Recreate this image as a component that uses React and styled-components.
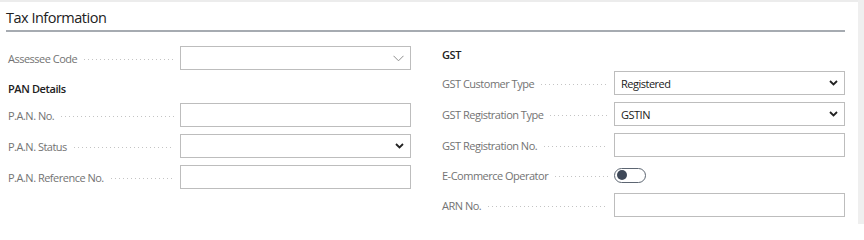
import React from "react";
import styled, { createGlobalStyle } from "styled-components";

const GlobalStyle = createGlobalStyle`
  html, body {
    margin: 0;
    padding: 0;
    background: #ffffff;
  }
  body {
    font-family: "Open Sans", "Noto Sans", "Liberation Sans", sans-serif;
  }
`;

const Page = styled.div`
  display: flex;
  width: 864px;
  height: 224px;
  overflow: hidden;
`;

const Main = styled.div`
  flex: 1;
  border-top: 2px solid #ececec;
  padding: 0 13px 0 6px;
`;

const ScrollStrip = styled.div`
  width: 6px;
  background: #efefef;
`;

const Title = styled.div`
  font-size: 14.5px;
  letter-spacing: -0.5px;
  line-height: 20px;
  color: #212121;
  padding-top: 6px;
  padding-bottom: 2px;
  border-bottom: 2px solid #a6abb1;
`;

const Columns = styled.div`
  display: grid;
  grid-template-columns: 403px 403px;
  column-gap: 31px;
  padding: 14px 0 0 2px;
`;

const Column = styled.div`
  display: flex;
  flex-direction: column;
  gap: 7px;
`;

const GroupHeader = styled.div`
  font-size: 11px;
  letter-spacing: -0.4px;
  line-height: 14px;
  font-weight: 600;
  color: #212121;
  padding: ${(p) => (p.$first ? "2px 0 2px" : "5px 0 0")};
`;

const Field = styled.div`
  display: grid;
  grid-template-columns: 172px 231px;
  align-items: center;
  height: ${(p) => (p.$short ? "22px" : "24px")};
`;

const Label = styled.div`
  display: flex;
  align-items: center;
  font-size: 11px;
  letter-spacing: -0.5px;
  color: #737373;
  white-space: nowrap;
  padding-right: 6px;
`;

const Leader = styled.span`
  flex: 1;
  height: 1px;
  margin: 3px 0 0 7px;
  background-image: linear-gradient(to right, #c4c4c4 1px, transparent 1px);
  background-size: 4px 1px;
  background-repeat: repeat-x;
`;

const Box = styled.div`
  box-sizing: border-box;
  height: 24px;
  border: 1px solid #bdbdbd;
  display: flex;
  align-items: center;
  justify-content: space-between;
  padding: 0 6px 0 6px;
  font-size: 11px;
  letter-spacing: -0.5px;
  color: #212121;
`;

const Toggle = styled.div`
  box-sizing: border-box;
  width: 32px;
  height: 15px;
  border: 1px solid #5d6672;
  border-radius: 8px;
  display: flex;
  align-items: center;
  padding-left: 2px;
`;

const Knob = styled.span`
  width: 10px;
  height: 10px;
  border-radius: 50%;
  background: #3e4858;
`;

const LookupChevron = () => (
  <svg width="11" height="7" viewBox="0 0 11 7">
    <path d="M0.5 0.8 L5.5 5.8 L10.5 0.8" fill="none" stroke="#8e8e8e" strokeWidth="1" />
  </svg>
);

const SelectChevron = () => (
  <svg width="9" height="6" viewBox="0 0 9 6">
    <path d="M1 1 L4.5 4.5 L8 1" fill="none" stroke="#222" strokeWidth="1.8" />
  </svg>
);

function Row({ label, children, short }) {
  return (
    <Field $short={short}>
      <Label>
        {label}
        <Leader />
      </Label>
      {children}
    </Field>
  );
}

export default function App() {
  return (
    <Page>
      <GlobalStyle />
      <Main>
        <Title>Tax Information</Title>
        <Columns>
          <Column>
            <Row label="Assessee Code">
              <Box>
                <span />
                <LookupChevron />
              </Box>
            </Row>
            <GroupHeader>PAN Details</GroupHeader>
            <Row label="P.A.N. No.">
              <Box />
            </Row>
            <Row label="P.A.N. Status">
              <Box>
                <span />
                <SelectChevron />
              </Box>
            </Row>
            <Row label="P.A.N. Reference No.">
              <Box />
            </Row>
          </Column>
          <Column>
            <GroupHeader $first>GST</GroupHeader>
            <Row label="GST Customer Type">
              <Box>
                <span>Registered</span>
                <SelectChevron />
              </Box>
            </Row>
            <Row label="GST Registration Type">
              <Box>
                <span>GSTIN</span>
                <SelectChevron />
              </Box>
            </Row>
            <Row label="GST Registration No.">
              <Box />
            </Row>
            <Row label="E-Commerce Operator" short>
              <div>
                <Toggle>
                  <Knob />
                </Toggle>
              </div>
            </Row>
            <Row label="ARN No.">
              <Box />
            </Row>
          </Column>
        </Columns>
      </Main>
      <ScrollStrip />
    </Page>
  );
}
